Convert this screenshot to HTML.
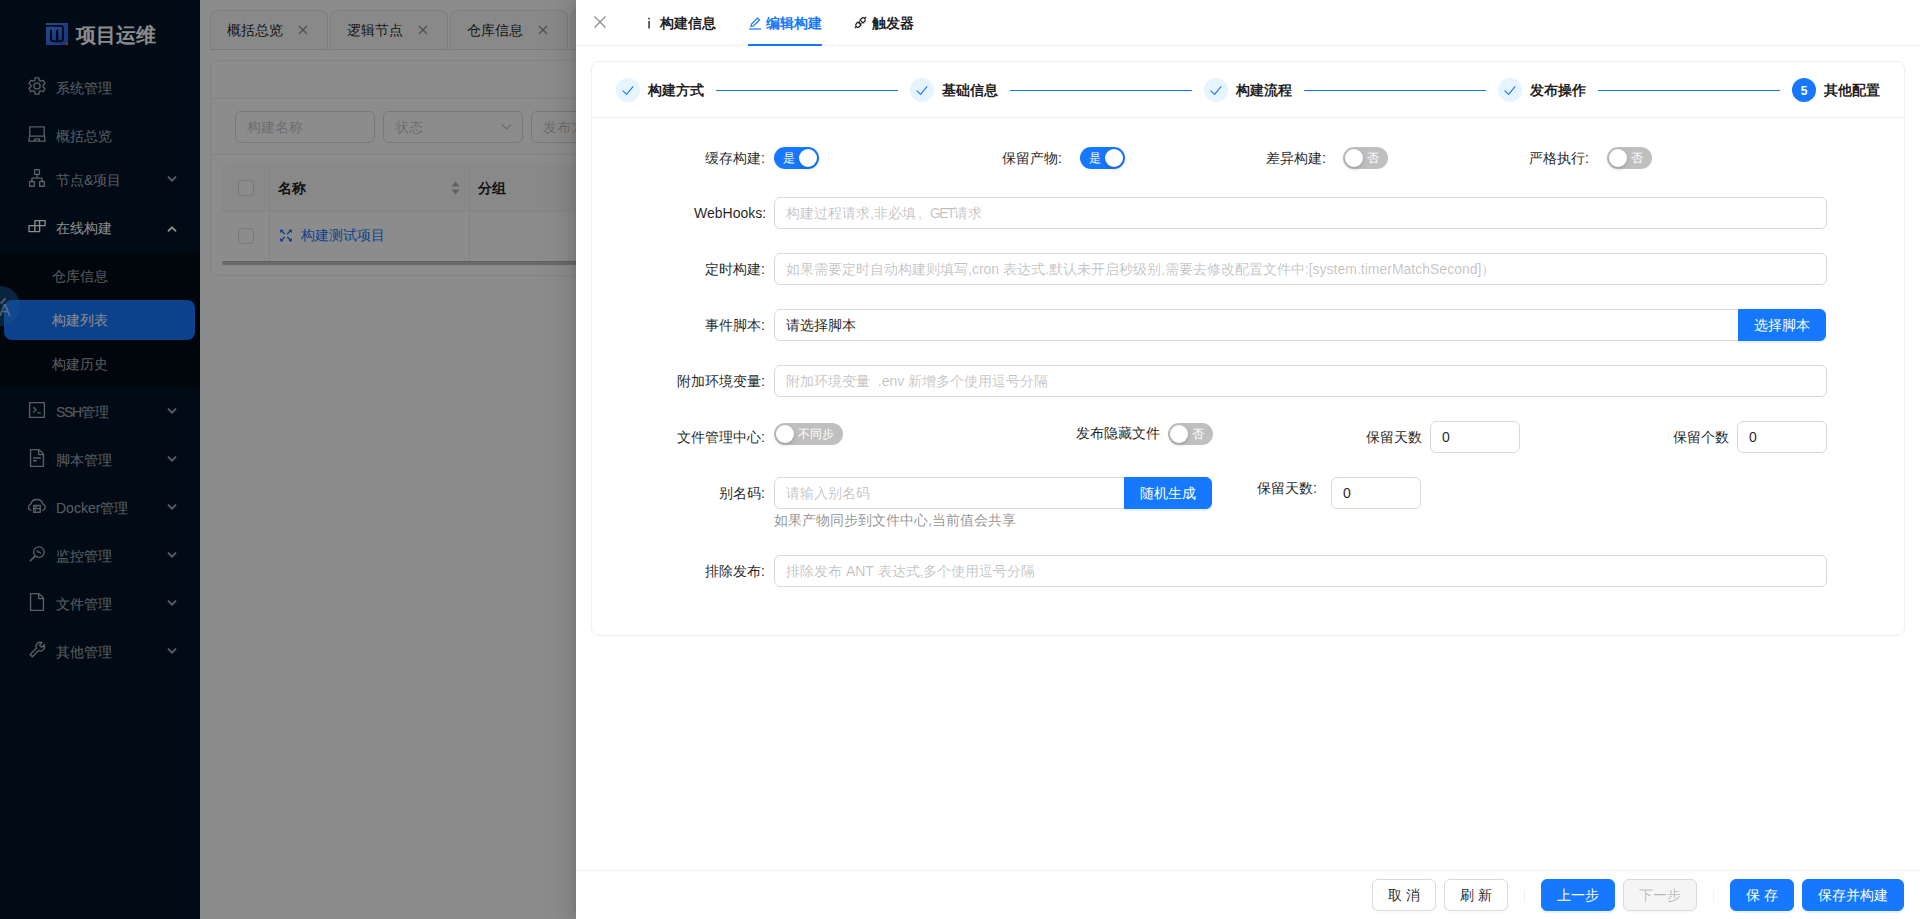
<!DOCTYPE html>
<html><head><meta charset="utf-8">
<style>
*{box-sizing:border-box;margin:0;padding:0}
html,body{width:1920px;height:919px;overflow:hidden;background:#fff;font-family:"Liberation Sans",sans-serif;font-size:14px;color:rgba(0,0,0,0.88)}
.a{position:absolute;white-space:nowrap}
#side{position:absolute;left:0;top:0;width:200px;height:919px;background:#001529}
.mi{position:absolute;left:0;width:200px;height:40px;color:rgba(255,255,255,0.65);line-height:40px}
.mi .ic{position:absolute;left:28px;top:12px;width:16px;height:16px}
.mi .tx{position:absolute;left:56px;top:0}
.mi .ar{position:absolute;left:167px;top:15px;width:10px;height:8px}
#main{position:absolute;left:200px;top:0;width:1720px;height:919px;background:#fff}
#mask{position:absolute;left:0;top:0;width:1920px;height:919px;background:rgba(0,0,0,0.45)}
#drawer{position:absolute;left:576px;top:0;width:1344px;height:919px;background:#fff;box-shadow:-6px 0 16px 0 rgba(0,0,0,0.08),-3px 0 6px -4px rgba(0,0,0,0.12),-9px 0 28px 8px rgba(0,0,0,0.05)}
.inp{position:absolute;height:32px;border:1px solid #d9d9d9;border-radius:6px;background:#fff;padding:0 11px;line-height:30px;color:rgba(0,0,0,0.88)}
.ph{color:rgba(0,0,0,0.25)}
.lbl{position:absolute;line-height:22px;color:rgba(0,0,0,0.88)}
.sw{position:absolute;height:22px;border-radius:11px;background:rgba(0,0,0,0.25)}
.sw.on{background:#1677ff}
.sw .h{position:absolute;top:2px;width:18px;height:18px;border-radius:50%;background:#fff;box-shadow:0 2px 4px 0 rgba(0,35,11,0.2)}
.sw .t{position:absolute;top:0;line-height:22px;font-size:12px;color:#fff}
.btn{position:absolute;height:32px;border-radius:6px;line-height:30px;text-align:center;border:1px solid #d9d9d9;background:#fff;color:rgba(0,0,0,0.88);box-shadow:0 2px 0 rgba(0,0,0,0.02)}
.btn.p{background:#1677ff;border-color:#1677ff;color:#fff;box-shadow:0 2px 0 rgba(5,145,255,0.1)}
.btn.d{background:rgba(0,0,0,0.04);color:rgba(0,0,0,0.25)}
</style></head><body>
<div id="side">
<div class="a" style="left:46px;top:23px;width:22px;height:22px;background:linear-gradient(135deg,#4f86f8,#2260ea)"><svg width="22" height="22" viewBox="0 0 22 22" style="position:absolute;left:0;top:0"><path d="M0 2.9 H14.8 Q17 2.9 17 5.1 V16.1 Q17 18.2 14.9 18.2 H7.1 Q5 18.2 5 16.1 V6.8" stroke="#001529" stroke-width="1.9" fill="none"/><path d="M11.1 6.8 V17.5" stroke="#001529" stroke-width="2.3"/><circle cx="20.6" cy="20.6" r="1.5" fill="#ee5a1c"/></svg></div>
<div class="a" style="left:76px;top:22px;font-size:20px;font-weight:bold;color:#fff;line-height:26px">项目运维</div>
<div class="mi" style="top:68px"><svg style="position:absolute;left:24px;top:6px" width="28" height="28" viewBox="0 0 28 28"><g stroke="rgba(255,255,255,0.65)" fill="none" stroke-width="1.35" stroke-linejoin="round"><path d="M10.71 6.34 L11.11 3.82 L14.89 3.82 L15.29 6.34 L16.76 7.19 L19.14 6.27 L21.03 9.54 L19.04 11.15 L19.04 12.85 L21.03 14.46 L19.14 17.73 L16.76 16.81 L15.29 17.66 L14.89 20.18 L11.11 20.18 L10.71 17.66 L9.24 16.81 L6.86 17.73 L4.97 14.46 L6.96 12.85 L6.96 11.15 L4.97 9.54 L6.86 6.27 L9.24 7.19 Z"/><circle cx="13" cy="12" r="3.1"/></g></svg><span class="tx">系统管理</span></div>
<div class="mi" style="top:116px"><svg style="position:absolute;left:24px;top:6px" width="28" height="28" viewBox="0 0 28 28"><g stroke="rgba(255,255,255,0.65)" fill="none" stroke-width="1.35" stroke-linejoin="round"><path d="M5.75 14.1 V4.85 H20.25 V14.1 M5.75 14.1 H20.25 M5.75 14.1 L4.75 19.1 H21.25 L20.25 14.1"/><path d="M10.6 19 V17.4 Q10.6 16.8 11.3 16.8 H14.7 Q15.4 16.8 15.4 17.4 V19"/></g></svg><span class="tx">概括总览</span></div>
<div class="mi" style="top:160px"><svg style="position:absolute;left:24px;top:6px" width="28" height="28" viewBox="0 0 28 28"><g stroke="rgba(255,255,255,0.65)" fill="none" stroke-width="1.35" stroke-linejoin="round"><rect x="10.6" y="3.7" width="4.8" height="4.6"/><rect x="5.6" y="15.5" width="4.7" height="4.7"/><rect x="15.6" y="15.5" width="4.7" height="4.7"/><path d="M13 8.3 V12.1 M7.9 15.5 V12.1 H18 V15.5"/></g></svg><span class="tx">节点&amp;项目</span><svg class="ar" viewBox="0 0 10 8"><path d="M1.6 2.3 L5 5.7 L8.4 2.3" stroke="rgba(255,255,255,0.65)" stroke-width="1.8" stroke-linecap="square" fill="none"/></svg></div>
<div class="mi" style="top:208px;color:#fff"><svg style="position:absolute;left:24px;top:6px" width="28" height="28" viewBox="0 0 28 28"><g stroke="#fff" fill="none" stroke-width="1.35" stroke-linejoin="round"><path d="M5 11.6 H10.9 V6.6 H21.1 V11.6 H15.6 V17.6 H5 Z M10.9 11.6 V17.6 M10.9 11.6 H15.6 M15.6 6.6 V11.6"/></g></svg><span class="tx">在线构建</span><svg class="ar" viewBox="0 0 10 8" style="top:17px"><path d="M1.6 5.7 L5 2.3 L8.4 5.7" stroke="#fff" stroke-width="1.8" stroke-linecap="square" fill="none"/></svg></div>
<div class="mi" style="top:392px"><svg style="position:absolute;left:24px;top:6px" width="28" height="28" viewBox="0 0 28 28"><g stroke="rgba(255,255,255,0.65)" fill="none" stroke-width="1.35" stroke-linejoin="round"><rect x="5.6" y="4.6" width="14.8" height="14.8"/><path d="M9.3 9.2 L12 11.8 L9.3 14.5 M13.4 14.8 H16.8"/></g></svg><span class="tx"><span style="letter-spacing:-1.4px">SSH</span>管理</span><svg class="ar" viewBox="0 0 10 8"><path d="M1.6 2.3 L5 5.7 L8.4 2.3" stroke="rgba(255,255,255,0.65)" stroke-width="1.8" stroke-linecap="square" fill="none"/></svg></div>
<div class="mi" style="top:440px"><svg style="position:absolute;left:24px;top:6px" width="28" height="28" viewBox="0 0 28 28"><g stroke="rgba(255,255,255,0.65)" fill="none" stroke-width="1.35" stroke-linejoin="round"><path d="M6.55 3.65 H15 L19.45 8.1 V20.35 H6.55 Z M14.6 3.65 V8.6 H19.45"/><path d="M9.1 11.9 H16.8 M9.1 14.8 H12.8" stroke-width="1.5"/></g></svg><span class="tx">脚本管理</span><svg class="ar" viewBox="0 0 10 8"><path d="M1.6 2.3 L5 5.7 L8.4 2.3" stroke="rgba(255,255,255,0.65)" stroke-width="1.8" stroke-linecap="square" fill="none"/></svg></div>
<div class="mi" style="top:488px"><svg style="position:absolute;left:24px;top:6px" width="28" height="28" viewBox="0 0 28 28"><g stroke="rgba(255,255,255,0.65)" fill="none" stroke-width="1.35" stroke-linejoin="round"><path d="M7.3 16.5 C3.8 16 3.6 11.3 6.6 10.4 C7.6 7 10 5.5 12.9 5.5 C15.8 5.5 18.2 7.1 19.1 10.4 C22.1 11.3 21.9 16 18.3 16.5"/><rect x="9.75" y="11.45" width="6.5" height="6.8"/><path d="M9.75 14.6 H16.25 M11 12.9 H13 M11 16.5 H12"/></g></svg><span class="tx">Docker管理</span><svg class="ar" viewBox="0 0 10 8"><path d="M1.6 2.3 L5 5.7 L8.4 2.3" stroke="rgba(255,255,255,0.65)" stroke-width="1.8" stroke-linecap="square" fill="none"/></svg></div>
<div class="mi" style="top:536px"><svg style="position:absolute;left:24px;top:6px" width="28" height="28" viewBox="0 0 28 28"><g stroke="rgba(255,255,255,0.65)" fill="none" stroke-width="1.35" stroke-linejoin="round"><circle cx="14.9" cy="10.1" r="5.3"/><path d="M11.2 13.9 L6 19.1" stroke-width="1.5"/><path d="M12.9 8.3 L14.2 10.6 L14.9 9.7 L17.1 11.5" stroke-width="1.1"/></g></svg><span class="tx">监控管理</span><svg class="ar" viewBox="0 0 10 8"><path d="M1.6 2.3 L5 5.7 L8.4 2.3" stroke="rgba(255,255,255,0.65)" stroke-width="1.8" stroke-linecap="square" fill="none"/></svg></div>
<div class="mi" style="top:584px"><svg style="position:absolute;left:24px;top:6px" width="28" height="28" viewBox="0 0 28 28"><g stroke="rgba(255,255,255,0.65)" fill="none" stroke-width="1.35" stroke-linejoin="round"><path d="M6.55 3.65 H15 L19.45 8.1 V20.35 H6.55 Z M14.6 3.65 V8.6 H19.45"/></g></svg><span class="tx">文件管理</span><svg class="ar" viewBox="0 0 10 8"><path d="M1.6 2.3 L5 5.7 L8.4 2.3" stroke="rgba(255,255,255,0.65)" stroke-width="1.8" stroke-linecap="square" fill="none"/></svg></div>
<div class="mi" style="top:632px"><svg style="position:absolute;left:24px;top:6px" width="28" height="28" viewBox="0 0 28 28"><g stroke="rgba(255,255,255,0.65)" fill="none" stroke-width="1.35" stroke-linejoin="round"><path d="M6.12 16.52 L12.35 10.29 A4.3 4.3 0 0 1 18.09 4.69 L15.52 7.26 L17.64 9.38 L20.21 6.81 A4.3 4.3 0 0 1 14.61 12.55 L8.38 18.78 Z"/></g></svg><span class="tx">其他管理</span><svg class="ar" viewBox="0 0 10 8"><path d="M1.6 2.3 L5 5.7 L8.4 2.3" stroke="rgba(255,255,255,0.65)" stroke-width="1.8" stroke-linecap="square" fill="none"/></svg></div>
<div class="a" style="left:0;top:252px;width:200px;height:136px;background:#000c17"></div>
<div class="a" style="left:4px;top:300px;width:191px;height:40px;background:#1677ff;border-radius:8px"></div>
<div class="a" style="left:52px;top:256px;line-height:40px;color:rgba(255,255,255,0.65)">仓库信息</div>
<div class="a" style="left:52px;top:300px;line-height:40px;color:#fff">构建列表</div>
<div class="a" style="left:52px;top:344px;line-height:40px;color:rgba(255,255,255,0.65)">构建历史</div>
<div class="a" style="left:-20px;top:286px;width:40px;height:40px;border-radius:50%;background:rgba(40,150,255,0.4)"></div><div class="a" style="left:-1px;top:301px;color:rgba(255,255,255,0.6);font-size:17px;line-height:20px">A</div><div class="a" style="left:0;top:303px;width:7px;height:1.6px;background:rgba(255,255,255,0.55);transform:rotate(-48deg);transform-origin:left top"></div>
</div>
<div id="main"></div>
<div class="a" style="left:210px;top:49px;width:1500px;height:1px;background:#e6e6e6"></div>
<div class="a" style="left:210px;top:10px;width:118px;height:40px;background:rgba(0,0,0,0.02);border:1px solid #e6e6e6;border-bottom:none;border-radius:8px 8px 0 0"></div>
<div class="a" style="left:227px;top:20px;line-height:20px;color:rgba(0,0,0,0.88)">概括总览</div>
<svg class="a" style="left:298px;top:25px" width="10" height="10" viewBox="0 0 10 10"><path d="M1 1 L9 9 M9 1 L1 9" stroke="rgba(0,0,0,0.45)" stroke-width="1.1"/></svg>
<div class="a" style="left:330px;top:10px;width:118px;height:40px;background:rgba(0,0,0,0.02);border:1px solid #e6e6e6;border-bottom:none;border-radius:8px 8px 0 0"></div>
<div class="a" style="left:347px;top:20px;line-height:20px;color:rgba(0,0,0,0.88)">逻辑节点</div>
<svg class="a" style="left:418px;top:25px" width="10" height="10" viewBox="0 0 10 10"><path d="M1 1 L9 9 M9 1 L1 9" stroke="rgba(0,0,0,0.45)" stroke-width="1.1"/></svg>
<div class="a" style="left:450px;top:10px;width:118px;height:40px;background:rgba(0,0,0,0.02);border:1px solid #e6e6e6;border-bottom:none;border-radius:8px 8px 0 0"></div>
<div class="a" style="left:467px;top:20px;line-height:20px;color:rgba(0,0,0,0.88)">仓库信息</div>
<svg class="a" style="left:538px;top:25px" width="10" height="10" viewBox="0 0 10 10"><path d="M1 1 L9 9 M9 1 L1 9" stroke="rgba(0,0,0,0.45)" stroke-width="1.1"/></svg>
<div class="a" style="left:570px;top:10px;width:118px;height:40px;background:rgba(0,0,0,0.02);border:1px solid #e6e6e6;border-bottom:none;border-radius:8px 8px 0 0"></div>
<div class="a" style="left:587px;top:20px;line-height:20px;color:rgba(0,0,0,0.88)">构建列表</div>
<svg class="a" style="left:658px;top:25px" width="10" height="10" viewBox="0 0 10 10"><path d="M1 1 L9 9 M9 1 L1 9" stroke="rgba(0,0,0,0.45)" stroke-width="1.1"/></svg>
<div class="a" style="left:210px;top:60px;width:1500px;height:216px;background:#fff;border:1px solid #f0f0f0;border-radius:8px"></div>
<div class="a" style="left:211px;top:98px;width:1500px;height:1px;background:#f0f0f0"></div>
<div class="a" style="left:211px;top:154px;width:1500px;height:1px;background:#f0f0f0"></div>
<div class="inp ph" style="left:235px;top:111px;width:140px">构建名称</div>
<div class="inp ph" style="left:383px;top:111px;width:140px">状态<svg style="position:absolute;left:117px;top:11px" width="11" height="8" viewBox="0 0 11 8"><path d="M1 1.5 L5.5 6 L10 1.5" stroke="rgba(0,0,0,0.25)" stroke-width="1.1" fill="none"/></svg></div>
<div class="inp ph" style="left:531px;top:111px;width:140px">发布方式</div>
<div class="a" style="left:221px;top:164px;width:1480px;height:48px;background:#fafafa;border-radius:8px 8px 0 0;border-bottom:1px solid #f0f0f0"></div>
<div class="a" style="left:221px;top:212px;width:1480px;height:50px;background:#fff;border-bottom:1px solid #f0f0f0"></div>
<div class="a" style="left:269px;top:164px;width:1px;height:98px;background:#f0f0f0"></div>
<div class="a" style="left:469px;top:164px;width:1px;height:98px;background:#f0f0f0"></div>
<div class="a" style="left:569px;top:164px;width:1px;height:98px;background:#f0f0f0"></div>
<div class="a" style="left:238px;top:180px;width:16px;height:16px;border:1px solid #d9d9d9;border-radius:4px;background:#fff"></div>
<div class="a" style="left:238px;top:228px;width:16px;height:16px;border:1px solid #d9d9d9;border-radius:4px;background:#fff"></div>
<div class="a" style="left:278px;top:178px;line-height:20px;font-weight:bold">名称</div>
<div class="a" style="left:478px;top:178px;line-height:20px;font-weight:bold">分组</div>
<svg class="a" style="left:451px;top:181px" width="9" height="14" viewBox="0 0 9 14"><path d="M4.5 0.6 L8.6 5.6 H0.4 Z M4.5 13.4 L8.6 8.4 H0.4 Z" fill="rgba(0,0,0,0.29)"/></svg>
<svg class="a" style="left:280px;top:229px" width="12" height="13" viewBox="0 0 12 13"><g stroke="#1677ff" stroke-width="1.3" stroke-linecap="round" fill="#1677ff"><path d="M1.5 1.8 L4.5 4.8 M10.5 1.8 L7.5 4.8 M1.5 11.2 L4.5 8.2 M10.5 11.2 L7.5 8.2"/><path d="M0.8 1 H3 L0.8 3.2 Z M11.2 1 H9 L11.2 3.2 Z M0.8 12 H3 L0.8 9.8 Z M11.2 12 H9 L11.2 9.8 Z" stroke-width="0.8"/></g></svg>
<div class="a" style="left:301px;top:225px;line-height:20px;color:#1677ff">构建测试项目</div>
<div class="a" style="left:222px;top:261px;width:1480px;height:4px;background:rgba(0,0,0,0.25);border-radius:2px"></div>

<div id="mask"></div>
<div id="drawer"></div>
<svg class="a" style="left:594px;top:16px" width="12" height="12" viewBox="0 0 12 12"><path d="M0.5 0.5 L11.5 11.5 M11.5 0.5 L0.5 11.5" stroke="rgba(0,0,0,0.45)" stroke-width="1.3"/></svg>
<div class="a" style="left:576px;top:45px;width:1344px;height:1px;background:#f0f0f0"></div>
<div class="a" style="left:748px;top:44px;width:74px;height:2px;background:#1677ff"></div>
<svg class="a" style="left:647px;top:17px" width="4" height="12" viewBox="0 0 4 12"><rect x="1.3" y="0.8" width="1.5" height="1.6" fill="rgba(0,0,0,0.88)"/><rect x="1.35" y="4" width="1.4" height="7.5" fill="rgba(0,0,0,0.88)"/></svg>
<div class="a" style="left:660px;top:13px;line-height:20px;font-weight:bold">构建信息</div>
<svg class="a" style="left:748px;top:17px" width="14" height="13" viewBox="0 0 14 13"><g stroke="#1677ff" stroke-width="1.2" fill="none"><path d="M3 9.5 L3.5 7 L9.5 1 L11.5 3 L5.5 9 Z"/><path d="M1 12 H13"/></g></svg>
<div class="a" style="left:766px;top:13px;line-height:20px;font-weight:bold;color:#1677ff">编辑构建</div>
<svg class="a" style="left:854px;top:16px" width="13" height="13" viewBox="0 0 13 13"><g stroke="rgba(0,0,0,0.88)" stroke-width="1.2" fill="none"><path d="M4 6 L2.5 7.5 C1.5 8.5 1.5 10 2.5 10.8 C3.3 11.6 4.6 11.5 5.5 10.5 L7 9 Z"/><path d="M9 7 L10.5 5.5 C11.5 4.5 11.5 3 10.5 2.2 C9.7 1.4 8.4 1.5 7.5 2.5 L6 4 Z"/><path d="M0.8 12.2 L2.4 10.6 M10.6 2.4 L12.2 0.8 M5 6.5 L6 5.5 M6.5 8 L7.5 7"/></g></svg>
<div class="a" style="left:872px;top:13px;line-height:20px;font-weight:bold">触发器</div>
<div class="a" style="left:591px;top:61px;width:1314px;height:575px;border:1px solid #f0f0f0;border-radius:8px"></div>
<div class="a" style="left:592px;top:117px;width:1312px;height:1px;background:#f0f0f0"></div>
<div class="a" style="left:616px;top:78px;width:24px;height:24px;border-radius:50%;background:#e6f4ff"><svg style="position:absolute;left:6px;top:7px" width="12" height="10" viewBox="0 0 12 10"><path d="M0.6 5.6 L4.6 9.4 L11.2 1.4" stroke="#1677ff" stroke-width="1.1" fill="none"/></svg></div>
<div class="a" style="left:648px;top:80px;line-height:20px;font-weight:bold">构建方式</div>
<div class="a" style="left:716px;top:90px;width:182px;height:1px;background:#1677ff"></div>
<div class="a" style="left:910px;top:78px;width:24px;height:24px;border-radius:50%;background:#e6f4ff"><svg style="position:absolute;left:6px;top:7px" width="12" height="10" viewBox="0 0 12 10"><path d="M0.6 5.6 L4.6 9.4 L11.2 1.4" stroke="#1677ff" stroke-width="1.1" fill="none"/></svg></div>
<div class="a" style="left:942px;top:80px;line-height:20px;font-weight:bold">基础信息</div>
<div class="a" style="left:1010px;top:90px;width:182px;height:1px;background:#1677ff"></div>
<div class="a" style="left:1204px;top:78px;width:24px;height:24px;border-radius:50%;background:#e6f4ff"><svg style="position:absolute;left:6px;top:7px" width="12" height="10" viewBox="0 0 12 10"><path d="M0.6 5.6 L4.6 9.4 L11.2 1.4" stroke="#1677ff" stroke-width="1.1" fill="none"/></svg></div>
<div class="a" style="left:1236px;top:80px;line-height:20px;font-weight:bold">构建流程</div>
<div class="a" style="left:1304px;top:90px;width:182px;height:1px;background:#1677ff"></div>
<div class="a" style="left:1498px;top:78px;width:24px;height:24px;border-radius:50%;background:#e6f4ff"><svg style="position:absolute;left:6px;top:7px" width="12" height="10" viewBox="0 0 12 10"><path d="M0.6 5.6 L4.6 9.4 L11.2 1.4" stroke="#1677ff" stroke-width="1.1" fill="none"/></svg></div>
<div class="a" style="left:1530px;top:80px;line-height:20px;font-weight:bold">发布操作</div>
<div class="a" style="left:1598px;top:90px;width:182px;height:1px;background:#1677ff"></div>
<div class="a" style="left:1792px;top:78px;width:24px;height:24px;border-radius:50%;background:#1677ff;color:#fff;text-align:center;line-height:27px;font-size:12px;font-weight:bold">5</div>
<div class="a" style="left:1824px;top:80px;line-height:20px;font-weight:bold">其他配置</div>
<div class="lbl" style="left:705px;top:147px">缓存构建:</div>
<div class="sw on" style="left:774px;top:147px;width:45px"><span class="t" style="left:9px">是</span><div class="h" style="left:25px"></div></div>
<div class="lbl" style="left:1002px;top:147px">保留产物:</div>
<div class="sw on" style="left:1080px;top:147px;width:45px"><span class="t" style="left:9px">是</span><div class="h" style="left:25px"></div></div>
<div class="lbl" style="left:1266px;top:147px">差异构建:</div>
<div class="sw" style="left:1343px;top:147px;width:45px"><div class="h" style="left:2px"></div><span class="t" style="left:24px">否</span></div>
<div class="lbl" style="left:1529px;top:147px">严格执行:</div>
<div class="sw" style="left:1607px;top:147px;width:45px"><div class="h" style="left:2px"></div><span class="t" style="left:24px">否</span></div>
<div class="lbl" style="left:694px;top:202px">WebHooks:</div>
<div class="inp ph" style="left:774px;top:197px;width:1053px">构建过程请求,非必填<span style="display:inline-block;width:14px;padding-left:2px">,</span><span style="letter-spacing:-1.6px">GET</span>请求</div>
<div class="lbl" style="left:705px;top:258px">定时构建:</div>
<div class="inp ph" style="left:774px;top:253px;width:1053px">如果需要定时自动构建则填写,cron 表达式.默认未开启秒级别,需要去修改配置文件中:[system.timerMatchSecond]）</div>
<div class="lbl" style="left:677px;top:370px">附加环境变量:</div>
<div class="inp ph" style="left:774px;top:365px;width:1053px">附加环境变量&nbsp;&nbsp;.env 新增多个使用逗号分隔</div>
<div class="lbl" style="left:705px;top:560px">排除发布:</div>
<div class="inp ph" style="left:774px;top:555px;width:1053px">排除发布 ANT 表达式,多个使用逗号分隔</div>
<div class="lbl" style="left:705px;top:314px">事件脚本:</div>
<div class="inp" style="left:774px;top:309px;width:980px;border-radius:6px 0 0 6px">请选择脚本</div>
<div class="btn p" style="left:1738px;top:309px;width:88px;border-radius:0 6px 6px 0">选择脚本</div>
<div class="lbl" style="left:677px;top:426px">文件管理中心:</div>
<div class="sw" style="left:774px;top:423px;width:69px"><div class="h" style="left:2px"></div><span class="t" style="left:24px">不同步</span></div>
<div class="lbl" style="left:1076px;top:422px">发布隐藏文件</div>
<div class="sw" style="left:1168px;top:423px;width:45px"><div class="h" style="left:2px"></div><span class="t" style="left:24px">否</span></div>
<div class="lbl" style="left:1366px;top:426px">保留天数</div>
<div class="inp" style="left:1430px;top:421px;width:90px">0</div>
<div class="lbl" style="left:1673px;top:426px">保留个数</div>
<div class="inp" style="left:1737px;top:421px;width:90px">0</div>
<div class="lbl" style="left:719px;top:482px">别名码:</div>
<div class="inp ph" style="left:774px;top:477px;width:351px;border-radius:6px 0 0 6px">请输入别名码</div>
<div class="btn p" style="left:1124px;top:477px;width:88px;border-radius:0 6px 6px 0">随机生成</div>
<div class="lbl" style="left:774px;top:509px;color:rgba(0,0,0,0.45)">如果产物同步到文件中心,当前值会共享</div>
<div class="lbl" style="left:1257px;top:477px">保留天数:</div>
<div class="inp" style="left:1331px;top:477px;width:90px">0</div>
<div class="a" style="left:576px;top:870px;width:1344px;height:1px;background:#f0f0f0"></div>
<div class="btn " style="left:1372px;top:879px;width:64px">取 消</div>
<div class="btn " style="left:1444px;top:879px;width:64px">刷 新</div>
<div class="btn p" style="left:1541px;top:879px;width:74px">上一步</div>
<div class="btn d" style="left:1623px;top:879px;width:74px">下一步</div>
<div class="btn p" style="left:1730px;top:879px;width:64px">保 存</div>
<div class="btn p" style="left:1802px;top:879px;width:102px">保存并构建</div>
<div class="a" style="left:1524px;top:890px;width:1px;height:12px;background:rgba(5,5,5,0.06)"></div>
<div class="a" style="left:1713px;top:890px;width:1px;height:12px;background:rgba(5,5,5,0.06)"></div>

</body></html>
